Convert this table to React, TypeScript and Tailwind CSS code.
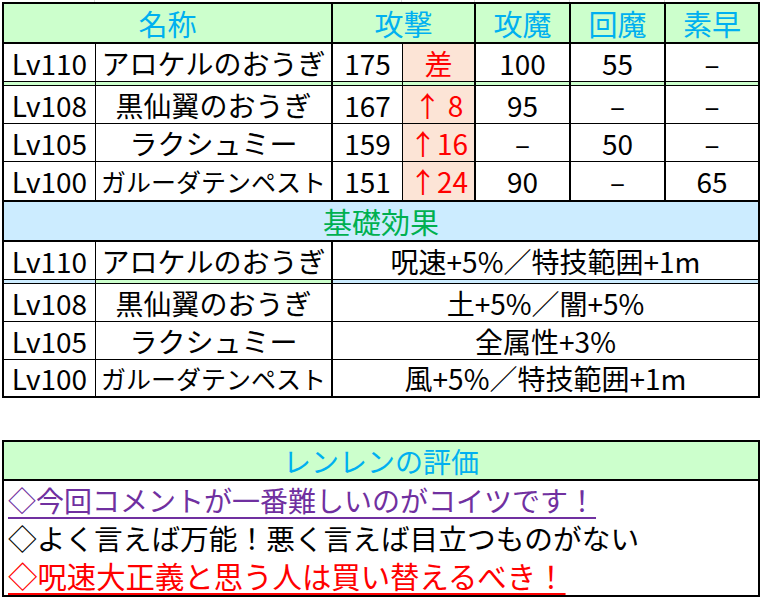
import React from "react";

type Row = { lv: string; name: string; nameSize: string; atk: string; diff: string; m: string; h: string; s: string };

const D = "–";

const rows: Row[] = [
  { lv: "Lv110", name: "アロケルのおうぎ", nameSize: "text-[28px]", atk: "175", diff: "差", m: "100", h: "55", s: D },
  { lv: "Lv108", name: "黒仙翼のおうぎ", nameSize: "text-[28px]", atk: "167", diff: "↑ 8", m: "95", h: D, s: D },
  { lv: "Lv105", name: "ラクシュミー", nameSize: "text-[28px]", atk: "159", diff: "↑16", m: D, h: "50", s: D },
  { lv: "Lv100", name: "ガルーダテンペスト", nameSize: "text-[25px]", atk: "151", diff: "↑24", m: "90", h: D, s: "65" },
];

const effects = [
  { lv: "Lv110", name: "アロケルのおうぎ", nameSize: "text-[28px]", eff: "呪速+5%／特技範囲+1m" },
  { lv: "Lv108", name: "黒仙翼のおうぎ", nameSize: "text-[28px]", eff: "土+5%／闇+5%" },
  { lv: "Lv105", name: "ラクシュミー", nameSize: "text-[28px]", eff: "全属性+3%" },
  { lv: "Lv100", name: "ガルーダテンペスト", nameSize: "text-[25px]", eff: "風+5%／特技範囲+1m" },
];

const cell = "flex items-center justify-center whitespace-nowrap";

function StatRow({ r, h, bottom }: { r: Row; h: string; bottom: boolean }) {
  return (
    <div className={`flex ${h} ${bottom ? "border-b border-black" : ""} text-[28px] text-black`}>
      <div className={`${cell} w-[91px]`}>{r.lv}</div>
      <div className={`${cell} w-[236px] border-l border-black ${r.nameSize}`}>{r.name}</div>
      <div className={`${cell} w-[71px] border-l-2 border-black`}>{r.atk}</div>
      <div className={`${cell} w-[72px] border-l border-black bg-[#fce4d6] text-[#ff0000]`}>{r.diff}</div>
      <div className={`${cell} w-[95px] border-l-2 border-black`}>{r.m}</div>
      <div className={`${cell} w-[95px] border-l-2 border-black`}>{r.h}</div>
      <div className={`${cell} w-[94px] border-l-2 border-black`}>{r.s}</div>
    </div>
  );
}

function EffRow({ e, h, bottom }: { e: (typeof effects)[number]; h: string; bottom: boolean }) {
  return (
    <div className={`flex ${h} ${bottom ? "border-b border-black" : ""} text-[28px] text-black`}>
      <div className={`${cell} w-[91px]`}>{e.lv}</div>
      <div className={`${cell} w-[236px] border-l border-black ${e.nameSize}`}>{e.name}</div>
      <div className={`${cell} w-[427px] border-l-2 border-black`}>{e.eff}</div>
    </div>
  );
}

export default function App() {
  return (
    <div className="w-[763px] h-[600px] bg-white font-['Noto_Sans_CJK_JP',sans-serif] leading-none overflow-hidden">
      <div className="flex h-[2px]">
        <div className="w-[95px] border-r border-[#dadada]" />
        <div className="w-[307px] border-r border-[#dadada]" />
        <div className="w-[73px] border-r border-[#dadada]" />
        <div className="w-[95px] border-r border-[#dadada]" />
        <div className="w-[95px] border-r border-[#dadada]" />
      </div>
      <div className="ml-[2px] w-[758px] border-2 border-black">
        {/* header */}
        <div className="flex h-[40px] border-b-2 border-black bg-[#ccffcc] text-[#00b0f0] text-[29px]">
          <div className={`${cell} w-[327px]`}>名称</div>
          <div className={`${cell} w-[143px] border-l-2 border-black`}>攻撃</div>
          <div className={`${cell} w-[95px] border-l-2 border-black`}>攻魔</div>
          <div className={`${cell} w-[95px] border-l-2 border-black`}>回魔</div>
          <div className={`${cell} w-[94px] border-l-2 border-black`}>素早</div>
        </div>
        <StatRow r={rows[0]} h="h-[38px]" bottom />
        <div className="flex h-[4px] border-b border-black bg-[#ccffcc]">
          <div className="w-[91px]" />
          <div className="w-[236px] border-l border-black" />
          <div className="w-[71px] border-l-2 border-black" />
          <div className="w-[72px] border-l border-black" />
          <div className="w-[95px] border-l-2 border-black" />
          <div className="w-[95px] border-l-2 border-black" />
          <div className="w-[94px] border-l-2 border-black" />
        </div>
        <StatRow r={rows[1]} h="h-[38px]" bottom />
        <StatRow r={rows[2]} h="h-[38px]" bottom />
        <StatRow r={rows[3]} h="h-[38px]" bottom={false} />
        {/* base effect header */}
        <div className={`${cell} h-[42px] border-y-2 border-black bg-[#ccecff] text-[#00b050] text-[29px]`}>基礎効果</div>
        <EffRow e={effects[0]} h="h-[38px]" bottom />
        <div className="flex h-[4px] border-b border-black">
          <div className="w-[91px] bg-[#ccecff]" />
          <div className="w-[236px] border-l border-black bg-[#ccffcc]" />
          <div className="w-[427px] border-l-2 border-black bg-[#ccecff]" />
        </div>
        <EffRow e={effects[1]} h="h-[38px]" bottom />
        <EffRow e={effects[2]} h="h-[38px]" bottom />
        <EffRow e={effects[3]} h="h-[36px]" bottom={false} />
      </div>

      <div className="ml-[2px] mt-[42px] w-[758px] border-2 border-black">
        <div className={`${cell} h-[39px] border-b-2 border-black bg-[#ccffcc] text-[#00b0f0] text-[28px]`}>レンレンの評価</div>
        <div className="flex flex-col pl-[4px]">
          <div className="flex h-[38px] items-center">
            <span className="text-[28px] text-[#7030a0] underline decoration-2 underline-offset-[5px] whitespace-nowrap">◇今回コメントが一番難しいのがコイツです！</span>
          </div>
          <div className="flex h-[38px] items-center">
            <span className="text-[28.7px] text-black whitespace-nowrap">◇よく言えば万能！悪く言えば目立つものがない</span>
          </div>
          <div className="flex h-[38px] items-center">
            <span className="text-[29.4px] text-[#ff0000] underline decoration-2 underline-offset-[5px] whitespace-nowrap">◇呪速大正義と思う人は買い替えるべき！</span>
          </div>
        </div>
      </div>
    </div>
  );
}
